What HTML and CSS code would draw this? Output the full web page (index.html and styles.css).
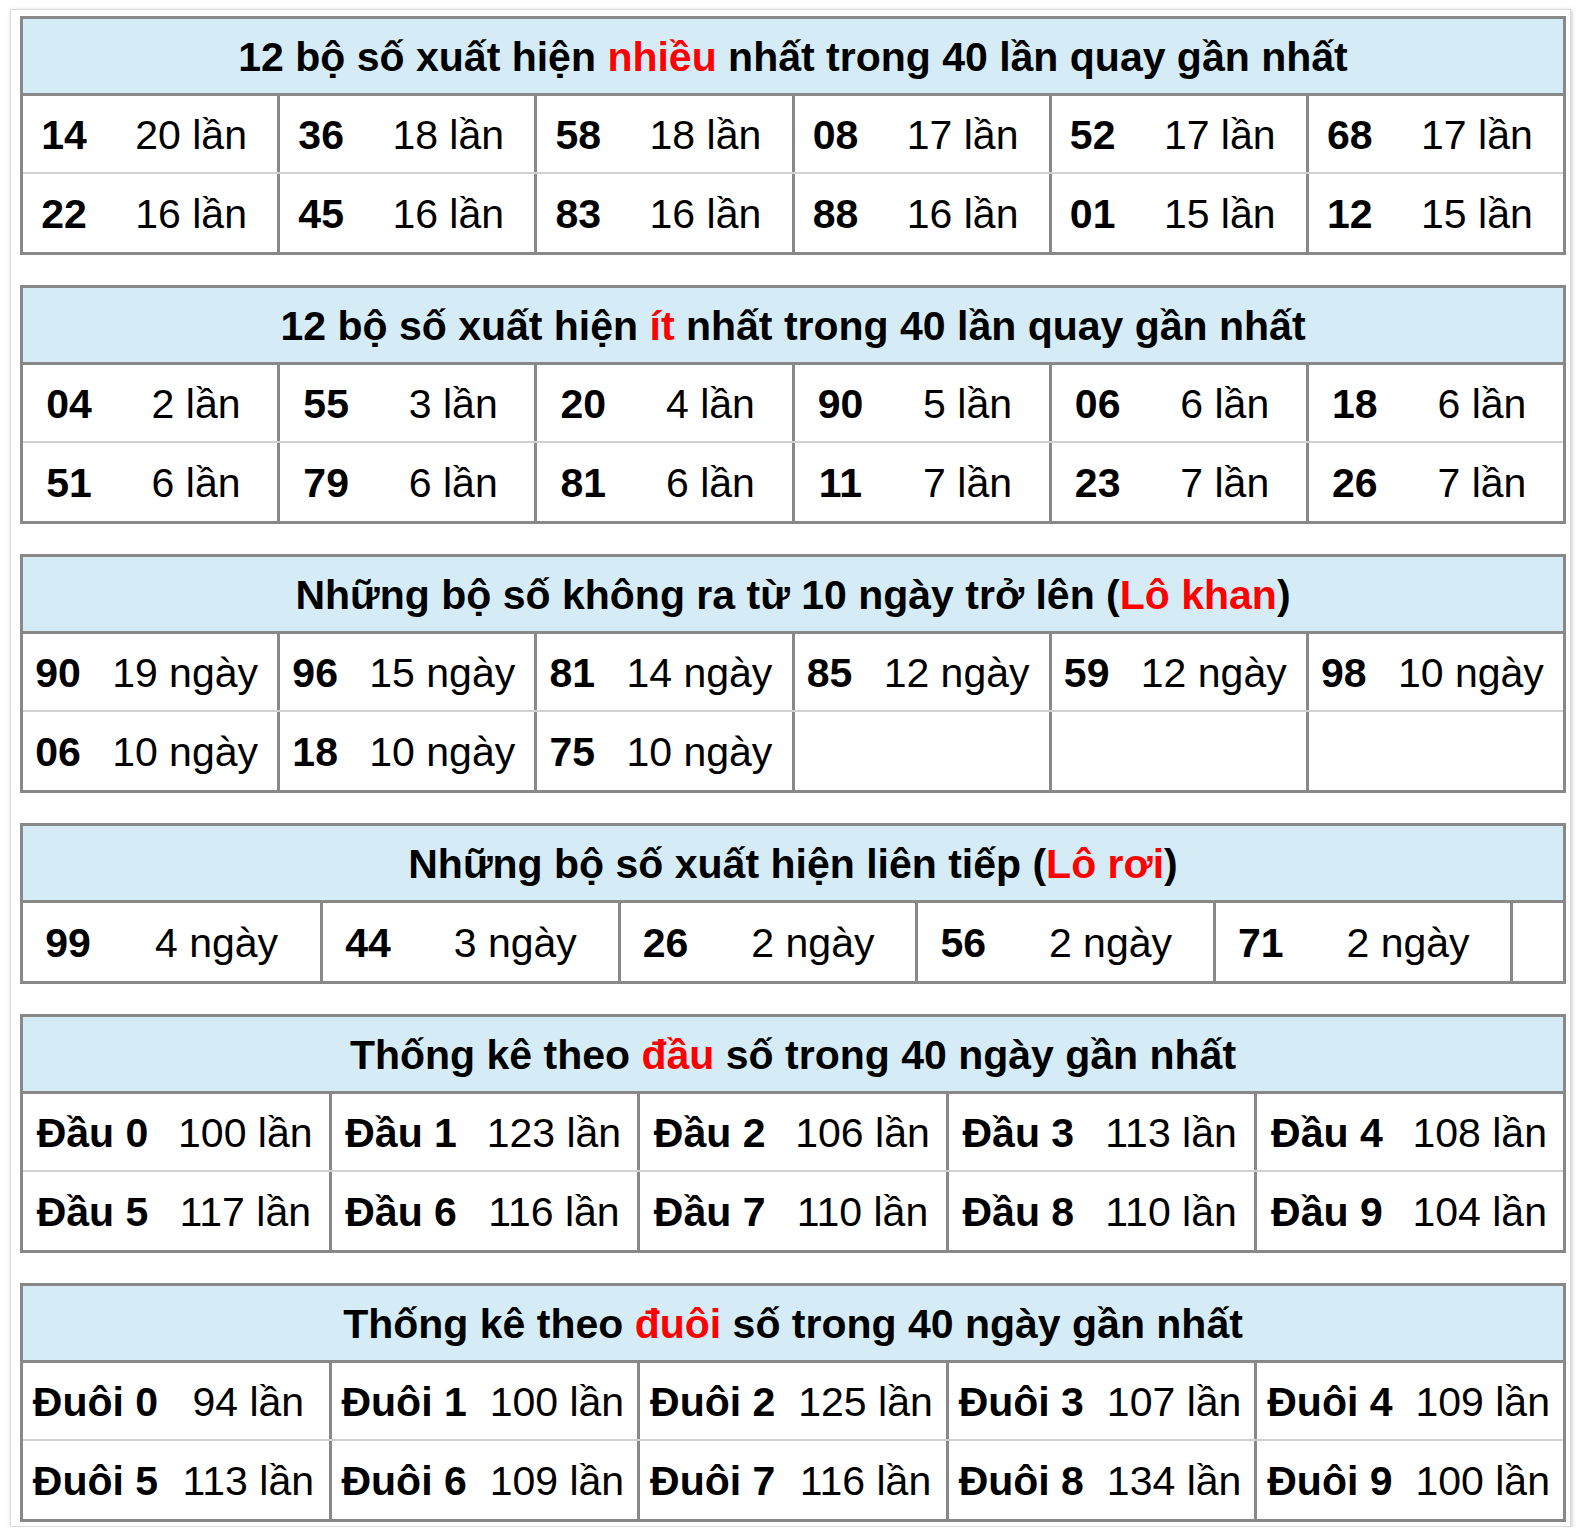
FILE: index.html
```html
<!DOCTYPE html>
<html lang="vi">
<head>
<meta charset="utf-8">
<title>Thống kê lô tô</title>
<link rel="stylesheet" href="styles.css">
</head>
<body>
<div class="wrap">

  <section class="panel s1">
    <div class="head">12 bộ số xuất hiện&nbsp;<span class="hl">nhiều</span>&nbsp;nhất trong 40 lần quay gần nhất</div>
    <div class="row top">
      <div class="cell n">14</div><div class="cell">20 lần</div>
      <div class="cell n sep">36</div><div class="cell">18 lần</div>
      <div class="cell n sep">58</div><div class="cell">18 lần</div>
      <div class="cell n sep">08</div><div class="cell">17 lần</div>
      <div class="cell n sep">52</div><div class="cell">17 lần</div>
      <div class="cell n sep">68</div><div class="cell">17 lần</div>
    </div>
    <div class="row">
      <div class="cell n">22</div><div class="cell">16 lần</div>
      <div class="cell n sep">45</div><div class="cell">16 lần</div>
      <div class="cell n sep">83</div><div class="cell">16 lần</div>
      <div class="cell n sep">88</div><div class="cell">16 lần</div>
      <div class="cell n sep">01</div><div class="cell">15 lần</div>
      <div class="cell n sep">12</div><div class="cell">15 lần</div>
    </div>
  </section>

  <section class="panel s2">
    <div class="head">12 bộ số xuất hiện&nbsp;<span class="hl">ít</span>&nbsp;nhất trong 40 lần quay gần nhất</div>
    <div class="row top">
      <div class="cell n">04</div><div class="cell">2 lần</div>
      <div class="cell n sep">55</div><div class="cell">3 lần</div>
      <div class="cell n sep">20</div><div class="cell">4 lần</div>
      <div class="cell n sep">90</div><div class="cell">5 lần</div>
      <div class="cell n sep">06</div><div class="cell">6 lần</div>
      <div class="cell n sep">18</div><div class="cell">6 lần</div>
    </div>
    <div class="row">
      <div class="cell n">51</div><div class="cell">6 lần</div>
      <div class="cell n sep">79</div><div class="cell">6 lần</div>
      <div class="cell n sep">81</div><div class="cell">6 lần</div>
      <div class="cell n sep">11</div><div class="cell">7 lần</div>
      <div class="cell n sep">23</div><div class="cell">7 lần</div>
      <div class="cell n sep">26</div><div class="cell">7 lần</div>
    </div>
  </section>

  <section class="panel s3">
    <div class="head">Những bộ số không ra từ 10 ngày trở lên (<span class="hl">Lô khan</span>)</div>
    <div class="row top">
      <div class="cell n">90</div><div class="cell">19 ngày</div>
      <div class="cell n sep">96</div><div class="cell">15 ngày</div>
      <div class="cell n sep">81</div><div class="cell">14 ngày</div>
      <div class="cell n sep">85</div><div class="cell">12 ngày</div>
      <div class="cell n sep">59</div><div class="cell">12 ngày</div>
      <div class="cell n sep">98</div><div class="cell">10 ngày</div>
    </div>
    <div class="row">
      <div class="cell n">06</div><div class="cell">10 ngày</div>
      <div class="cell n sep">18</div><div class="cell">10 ngày</div>
      <div class="cell n sep">75</div><div class="cell">10 ngày</div>
      <div class="cell n sep"></div><div class="cell"></div>
      <div class="cell n sep"></div><div class="cell"></div>
      <div class="cell n sep"></div><div class="cell"></div>
    </div>
  </section>

  <section class="panel s4">
    <div class="head">Những bộ số xuất hiện liên tiếp (<span class="hl">Lô rơi</span>)</div>
    <div class="row">
      <div class="cell n">99</div><div class="cell">4 ngày</div>
      <div class="cell n sep">44</div><div class="cell">3 ngày</div>
      <div class="cell n sep">26</div><div class="cell">2 ngày</div>
      <div class="cell n sep">56</div><div class="cell">2 ngày</div>
      <div class="cell n sep">71</div><div class="cell">2 ngày</div>
      <div class="cell sep"></div>
    </div>
  </section>

  <section class="panel s5">
    <div class="head">Thống kê theo&nbsp;<span class="hl">đầu</span>&nbsp;số trong 40 ngày gần nhất</div>
    <div class="row top">
      <div class="cell n">Đầu 0</div><div class="cell">100 lần</div>
      <div class="cell n sep">Đầu 1</div><div class="cell">123 lần</div>
      <div class="cell n sep">Đầu 2</div><div class="cell">106 lần</div>
      <div class="cell n sep">Đầu 3</div><div class="cell">113 lần</div>
      <div class="cell n sep">Đầu 4</div><div class="cell">108 lần</div>
    </div>
    <div class="row">
      <div class="cell n">Đầu 5</div><div class="cell">117 lần</div>
      <div class="cell n sep">Đầu 6</div><div class="cell">116 lần</div>
      <div class="cell n sep">Đầu 7</div><div class="cell">110 lần</div>
      <div class="cell n sep">Đầu 8</div><div class="cell">110 lần</div>
      <div class="cell n sep">Đầu 9</div><div class="cell">104 lần</div>
    </div>
  </section>

  <section class="panel s6">
    <div class="head">Thống kê theo&nbsp;<span class="hl">đuôi</span>&nbsp;số trong 40 ngày gần nhất</div>
    <div class="row top">
      <div class="cell n">Đuôi 0</div><div class="cell">94 lần</div>
      <div class="cell n sep">Đuôi 1</div><div class="cell">100 lần</div>
      <div class="cell n sep">Đuôi 2</div><div class="cell">125 lần</div>
      <div class="cell n sep">Đuôi 3</div><div class="cell">107 lần</div>
      <div class="cell n sep">Đuôi 4</div><div class="cell">109 lần</div>
    </div>
    <div class="row">
      <div class="cell n">Đuôi 5</div><div class="cell">113 lần</div>
      <div class="cell n sep">Đuôi 6</div><div class="cell">109 lần</div>
      <div class="cell n sep">Đuôi 7</div><div class="cell">116 lần</div>
      <div class="cell n sep">Đuôi 8</div><div class="cell">134 lần</div>
      <div class="cell n sep">Đuôi 9</div><div class="cell">100 lần</div>
    </div>
  </section>

</div>
</body>
</html>
```

FILE: styles.css
```css
* {
  box-sizing: border-box;
}

body {
  margin: 0;
  background: #ffffff;
  color: #000000;
  font-family: "Liberation Sans", Arial, Helvetica, sans-serif;
}

.wrap {
  width: 1561px;
  margin: 9px 0 0 10px;
  padding: 6px 4px 4px 9px;
  border: 1px solid #dcdcdc;
  box-shadow: 1px 1px 4px rgba(0, 0, 0, 0.22);
}

.panel {
  width: 1546px;
  border: 3px solid #888888;
  margin-bottom: 30px;
}

.panel:last-child {
  margin-bottom: 0;
}

.head {
  height: 77px;
  padding-top: 3px;
  border-bottom: 3px solid #888888;
  background: #d5ecf6;
  display: flex;
  align-items: center;
  justify-content: center;
  font-size: 41px;
  font-weight: bold;
  white-space: nowrap;
}

.hl {
  color: #ff0000;
}

.row {
  display: grid;
  height: 78px;
}

.row.top {
  height: 78px;
  border-bottom: 2px solid #d0d0d0;
}

.s1 .row { grid-template-columns: 82px minmax(0, 1fr) repeat(5, 85px minmax(0, 1fr)); }
.s2 .row { grid-template-columns: 92px minmax(0, 1fr) repeat(5, 95px minmax(0, 1fr)); }
.s3 .row { grid-template-columns: 70px minmax(0, 1fr) repeat(5, 73px minmax(0, 1fr)); }
.s4 .row { grid-template-columns: 90px 207px repeat(4, 93px 204.6px) minmax(0, 1fr); }
.s5 .row { grid-template-columns: 139px minmax(0, 1fr) repeat(4, 142px minmax(0, 1fr)); }
.s6 .row { grid-template-columns: 145px minmax(0, 1fr) repeat(4, 148px minmax(0, 1fr)); }

.cell {
  display: flex;
  align-items: center;
  justify-content: center;
  padding-top: 3px;
  font-size: 41px;
  white-space: nowrap;
}

.n {
  font-weight: bold;
}

.sep {
  border-left: 3px solid #888888;
}
```
